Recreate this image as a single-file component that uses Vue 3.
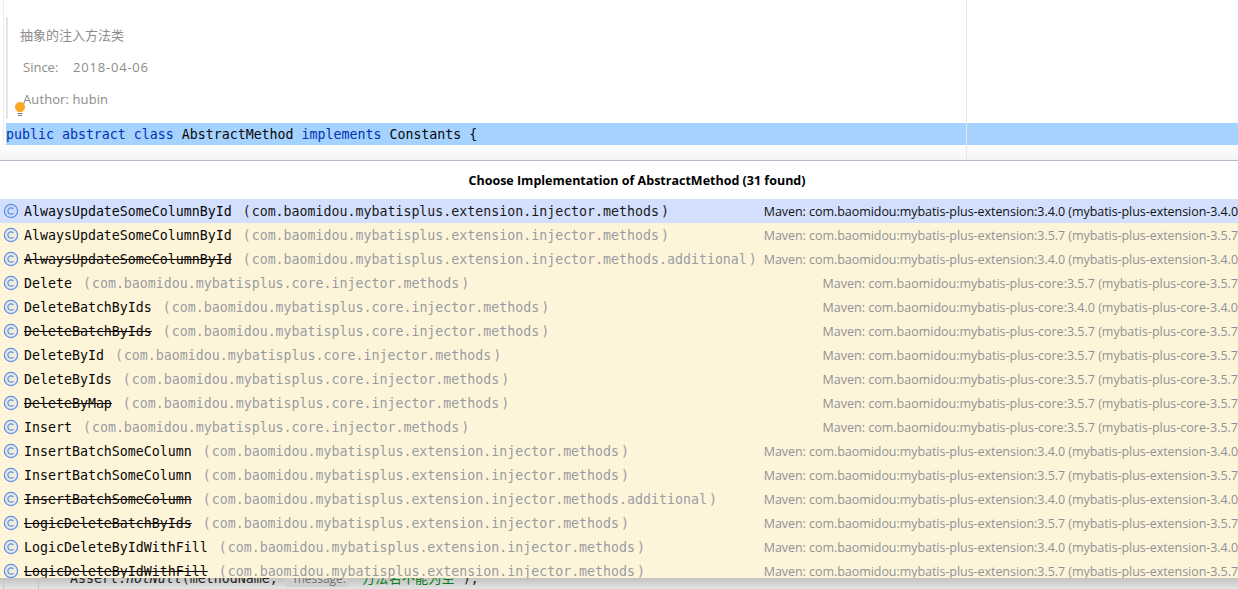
<script setup>
const ext = 'com.baomidou.mybatisplus.extension.injector.methods'
const core = 'com.baomidou.mybatisplus.core.injector.methods'
const mvExt = (v) => `Maven: com.baomidou:mybatis-plus-extension:${v} (mybatis-plus-extension-${v}`
const mvCore = (v) => `Maven: com.baomidou:mybatis-plus-core:${v} (mybatis-plus-core-${v}`
const rows = [
  { name: 'AlwaysUpdateSomeColumnById', pkg: ext, src: mvExt('3.4.0'), selected: true },
  { name: 'AlwaysUpdateSomeColumnById', pkg: ext, src: mvExt('3.5.7') },
  { name: 'AlwaysUpdateSomeColumnById', pkg: ext + '.additional', src: mvExt('3.4.0'), old: true },
  { name: 'Delete', pkg: core, src: mvCore('3.5.7') },
  { name: 'DeleteBatchByIds', pkg: core, src: mvCore('3.4.0') },
  { name: 'DeleteBatchByIds', pkg: core, src: mvCore('3.5.7'), old: true },
  { name: 'DeleteById', pkg: core, src: mvCore('3.5.7') },
  { name: 'DeleteByIds', pkg: core, src: mvCore('3.5.7') },
  { name: 'DeleteByMap', pkg: core, src: mvCore('3.5.7'), old: true },
  { name: 'Insert', pkg: core, src: mvCore('3.5.7') },
  { name: 'InsertBatchSomeColumn', pkg: ext, src: mvExt('3.4.0') },
  { name: 'InsertBatchSomeColumn', pkg: ext, src: mvExt('3.5.7') },
  { name: 'InsertBatchSomeColumn', pkg: ext + '.additional', src: mvExt('3.4.0'), old: true },
  { name: 'LogicDeleteBatchByIds', pkg: ext, src: mvExt('3.5.7'), old: true },
  { name: 'LogicDeleteByIdWithFill', pkg: ext, src: mvExt('3.4.0') },
  { name: 'LogicDeleteByIdWithFill', pkg: ext, src: mvExt('3.5.7'), old: true },
]
</script>

<template>
  <div class="page">
    <section class="editor">
      <div class="gutter-line"></div>
      <div class="margin-line"></div>
      <div class="doc">
        <p class="doc-line doc-cn">抽象的注入方法类</p>
        <p class="doc-line doc-tag"><span class="tag-name">Since:</span><span class="date">2018-04-06</span></p>
        <p class="doc-line doc-tag"><span class="author">Author: hubin</span></p>
      </div>
      <svg class="bulb" width="12" height="18" viewBox="0 0 12 18">
        <circle cx="6" cy="6" r="5" fill="#f9a825" />
        <path d="M3.5 9.5h5V11h-5z" fill="#f9a825" />
        <path d="M3.5 12.5h5M4 14.5h4" stroke="#77736a" stroke-width="1" fill="none" />
      </svg>
      <div class="code-line"><span class="kw">public</span> <span class="kw">abstract</span> <span class="kw">class</span> AbstractMethod <span class="kw">implements</span> Constants {</div>
      <div class="fade"></div>
    </section>

    <section class="popup">
      <h1 class="title">Choose Implementation of AbstractMethod (31 found)</h1>
      <div class="list">
        <div v-for="(r, i) in rows" :key="i" class="row" :class="{ selected: r.selected }">
          <svg class="cicon" width="16" height="16" viewBox="0 0 16 16">
            <circle cx="8" cy="8" r="6.6" fill="#c9d8f7" fill-opacity=".3" stroke="#5b8de6" stroke-width="1.2" />
            <path d="M10.5 5.9A3.2 3.2 0 1 0 10.5 10.1" fill="none" stroke="#5b8de6" stroke-width="1.2" />
          </svg>
          <span class="name" :class="{ old: r.old }">{{ r.name }}</span>
          <span class="pkg"><span class="open">(</span>{{ r.pkg }}<span class="close">)</span></span>
          <span class="src" :class="{ ext: r.src.includes('extension') }">{{ r.src }}</span>
        </div>
      </div>
    </section>

    <section class="below">
      <div class="below-gutter"></div>
      <div class="below-code">Assert.<i>notNull</i>(methodName, <span class="hint">message:</span> <span class="str">"方法名不能为空"</span>);</div>
    </section>
  </div>
</template>

<style>
html, body { margin: 0; background: #fff; overflow: hidden; }
</style>

<style scoped>
.page {
  width: 1238px;
  height: 589px;
  overflow: hidden;
  display: flex;
  flex-direction: column;
  font-family: "Open Sans", "Noto Sans CJK SC", sans-serif;
}
.editor {
  position: relative;
  height: 160px;
  flex: none;
  background: #fff;
  border-bottom: 1px solid #b9b9cb;
}
.gutter-line {
  position: absolute; left: 3px; top: 0; bottom: 0; width: 1px; background: #ececec;
}
.margin-line {
  position: absolute; left: 966px; top: 0; bottom: 0; width: 1px; background: #e8e8e8; z-index: 2;
}
.doc {
  position: absolute; left: 6px; top: 17px; height: 102px; width: 900px;
  border-left: 2px solid #e6e6e6;
  box-sizing: border-box;
  padding: 2px 0 0 12px;
  color: #8c8c8c;
  font-size: 13px;
}
.doc-line { margin: 0; height: 32px; line-height: 32px; }
.doc-tag { padding-left: 3px; }
.tag-name { display: inline-block; width: 50px; }
.date { letter-spacing: .8px; }
.author { letter-spacing: .1px; }
.bulb { position: absolute; left: 14px; top: 101px; z-index: 3; }
.code-line {
  position: absolute; left: 6px; right: 0; top: 123px; height: 22px;
  background: #a6d2ff;
  font: 13.28px/24px "DejaVu Sans Mono", monospace;
  color: #080808;
  white-space: pre;
}
.kw { color: #0033b3; }
.fade {
  position: absolute; left: 0; right: 0; top: 145px; height: 15px;
  background: linear-gradient(#fff, #f4f4f4);
}
.popup {
  flex: none;
  height: 417px;
  background: #fff;
  overflow: hidden;
  position: relative;
  z-index: 1;
}
.title {
  margin: 0;
  height: 38px;
  line-height: 40px;
  padding-left: 36px;
  text-align: center;
  font-size: 12.5px;
  font-weight: 700;
  color: #000;
}
.list { background: #fef4d9; }
.row {
  height: 24px;
  display: flex;
  align-items: center;
  white-space: nowrap;
  overflow: hidden;
}
.row.selected { background: #d2e0fd; }
.cicon { flex: none; margin-left: 3px; margin-right: 5px; }
.name {
  font: 13.28px "DejaVu Sans Mono", monospace;
  color: #080808;
}
.name.old { text-decoration: line-through; }
.pkg {
  font: 13.28px "DejaVu Sans Mono", monospace;
  color: #989ca3;
  margin-left: 11px;
}
.open { margin-right: 1px; }
.close { margin-left: 2px; }
.selected .pkg { color: #1a1a1a; }
.src {
  margin-left: auto;
  font-size: 12.5px;
  color: #8f9296;
  flex: none;
}
.src.ext { letter-spacing: -.05px; }
.selected .src { color: #111; }
.below {
  flex: 1;
  min-height: 0;
  position: relative;
  overflow: hidden;
  background: linear-gradient(#c2c2c2, #e4e4e4);
}
.below-gutter {
  position: absolute; left: 3px; top: 0; bottom: 0; width: 34px;
  border-left: 1px solid #c4c4c4;
  border-right: 1px solid #c4c4c4;
}
.below-code {
  font: 13.28px/22px "DejaVu Sans Mono", "Noto Sans CJK SC", monospace;
  margin: -10px 0 0 70px;
  color: #222;
  white-space: pre;
}
.hint {
  color: #707070;
  background: #cfcfcf;
  border-radius: 3px;
  font: 12px "Open Sans", sans-serif;
  padding: 0 2px 0 8px;
}
.str { color: #067d17; margin-left: -2px; }
</style>
